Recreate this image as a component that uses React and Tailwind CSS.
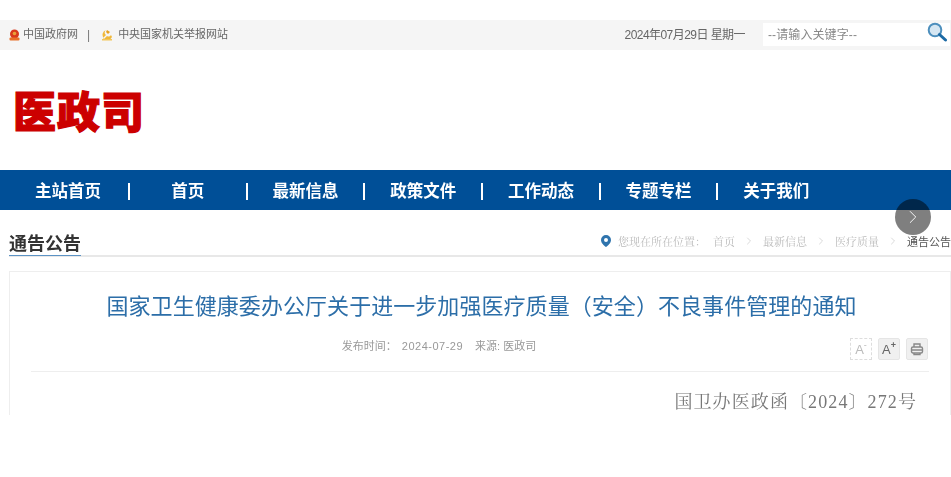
import React from "react";
import { ChevronRight } from "lucide-react";

const nav = ["主站首页", "首页", "最新信息", "政策文件", "工作动态", "专题专栏", "关于我们"];
const crumbs = ["首页", "最新信息", "医疗质量"];

function Emblem() {
  return (
    <svg width="11" height="12" viewBox="0 0 11 12" className="shrink-0">
      <circle cx="5.5" cy="5" r="4.5" fill="#d9391c" />
      <circle cx="5.5" cy="4.5" r="1.8" fill="#e9a13a" />
      <rect x="0.5" y="8.5" width="10" height="3" rx="1" fill="#e8702a" />
    </svg>
  );
}

function Party() {
  return (
    <svg width="12" height="12" viewBox="0 0 12 12" className="shrink-0">
      <path d="M5 1a5 5 0 1 0 6 7l-1-2a3 3 0 0 1-4 1L3 10l-1-1 3-3a3 3 0 0 1 0-5z" fill="#f0b83a" />
      <path d="M6 1l3 2-2 2-2-2z" fill="#e8a020" />
      <path d="M1 10h10v1.5H1z" fill="#f2c65a" />
    </svg>
  );
}

function Search() {
  return (
    <svg width="22" height="20" viewBox="0 0 22 20" className="absolute right-[2px] top-[-1px]">
      <circle cx="9" cy="8" r="6.3" fill="#d5e6f2" stroke="#4d8fbd" strokeWidth="2" />
      <path d="M13.5 12.5L19.5 18" stroke="#1c6aa5" strokeWidth="3" strokeLinecap="round" />
    </svg>
  );
}

function Pin() {
  return (
    <svg width="10" height="12" viewBox="0 0 10 12" className="shrink-0">
      <path fillRule="evenodd" d="M5 0a5 5 0 0 1 5 5c0 3-3 5.500-5 7-2-1.500-5-4-5-7a5 5 0 0 1 5-5zm0 3a2 2 0 1 0 0 4 2 2 0 0 0 0-4z" fill="#2f74ad" />
    </svg>
  );
}

function Printer() {
  return (
    <svg width="14" height="14" viewBox="0 0 14 14" fill="none" stroke="#888" strokeWidth="1.4">
      <path d="M4 5V2h6v3" />
      <rect x="1.5" y="5" width="11" height="6" rx="1.5" />
      <path d="M1.5 8h11M4 11v1.5h6V11" />
    </svg>
  );
}

export default function App() {
  return (
    <div className="h-[477px] w-[951px] overflow-hidden bg-white pt-5 font-['Liberation_Sans','Noto_Sans_CJK_SC',sans-serif]">
      <div className="flex h-[30px] items-center bg-[#f5f5f5] pb-[1px] pl-[9px] pr-[1px] text-[11px] text-[#666] blur-[0.4px]">
        <Emblem />
        <span className="ml-[3px]">中国政府网</span>
        <span className="ml-[9px] mr-[11px] text-[12px] text-[#777]">|</span>
        <Party />
        <span className="ml-[5px]">中央国家机关举报网站</span>
        <span className="ml-auto text-[12px] tracking-[-0.55px]">2024年07月29日 星期一</span>
        <div className="relative ml-[18px] flex h-[23px] w-[187px] items-center bg-white pl-[5px] text-[12px] text-[#888]">
          <span className="tracking-[0.1px]">--请输入关键字--</span>
          <Search />
        </div>
      </div>

      <div className="flex h-[120px] items-start pl-[13px] pt-[32px]">
        <span className="font-['Noto_Sans_CJK_SC',sans-serif] text-[43px] leading-[54px] font-black tracking-[1px] text-[#cc0000] [-webkit-text-stroke:1.2px_#cc0000]">
          医政司
        </span>
      </div>

      <nav className="flex h-10 items-center bg-[#004f97] pl-[10px] text-[16.5px] font-bold text-white blur-[0.35px]">
        {nav.map((item, i) => (
          <React.Fragment key={item}>
            {i === 1 && <span className="w-[2px] shrink-0" />}
            {i > 0 && <span className="mt-[2px] h-[17px] w-[2px] shrink-0 bg-white" />}
            <span className={`pt-[2px] text-center ${i === 0 ? "w-[116px]" : "w-[115.7px]"}`}>{item}</span>
          </React.Fragment>
        ))}
      </nav>

      <div className="relative">
        <button className="absolute left-[895px] top-[-11px] flex h-9 w-9 items-center justify-center rounded-full bg-[#000]/50 text-white">
          <ChevronRight size={22} strokeWidth={1} />
        </button>
      </div>

      <div className="ml-[9px] mt-5 flex h-[27px] items-end border-b-2 border-[#e8e8e8]">
        <h2 className="mb-[-1px] h-[27px] border-b border-[#5c93c5] pt-[3px] text-[18px] leading-[25px] font-bold text-[#333] blur-[0.35px]">
          通告公告
        </h2>
        <div className="ml-auto flex h-[25px] items-center pb-[3px] font-['Noto_Serif_CJK_SC','Noto_Sans_CJK_SC',serif] text-[11px] text-[#bbb] blur-[0.4px]">
          <Pin />
          <span className="ml-[7px] w-[95px]">您现在所在位置：</span>
          {crumbs.map((c) => (
            <React.Fragment key={c}>
              <span>{c}</span>
              <ChevronRight size={12} strokeWidth={1.5} className="mx-[8px] text-[#ccc]" />
            </React.Fragment>
          ))}
          <span className="font-['Noto_Sans_CJK_SC',sans-serif] text-[#555]">通告公告</span>
        </div>
      </div>

      <section className="ml-[9px] mt-[14px] h-[144px] overflow-hidden border-x border-t border-[#eee] px-[21px]">
        <h1 className="mt-5 pl-[3px] text-center text-[22px] leading-[30px] tracking-[0.06px] text-[#2c6ea8] blur-[0.3px]">
          国家卫生健康委办公厅关于进一步加强医疗质量（安全）不良事件管理的通知
        </h1>
        <div className="relative mt-[14px] h-[36px] border-b border-[#eee] pt-[2px] text-center text-[11px] leading-[17px] text-[#999] blur-[0.3px]">
          <div className="relative left-[-41px]">
            <span>发布时间：</span>
            <span className="ml-[5px] tracking-[0.5px]">2024-07-29</span>
            <span className="ml-3">来源: 医政司</span>
          </div>
          <div className="absolute right-[1px] top-[2px] flex gap-[6px]">
            <span className="flex h-[22px] w-[22px] items-center justify-center border border-dashed border-[#ddd] text-[13px] text-[#bbb]">
              A<sup className="text-[9px]">-</sup>
            </span>
            <span className="flex h-[22px] w-[22px] items-center justify-center rounded-[2px] border border-[#e5e5e5] bg-[#f0f0f0] text-[13px] text-[#666]">
              A<sup className="text-[9px] font-bold">+</sup>
            </span>
            <span className="flex h-[22px] w-[22px] items-center justify-center rounded-[2px] border border-[#e5e5e5] bg-[#f0f0f0]">
              <Printer />
            </span>
          </div>
        </div>
        <p className="mt-4 pr-[12px] text-right font-['Liberation_Serif','Noto_Serif_CJK_SC','Noto_Sans_CJK_SC',serif] text-[18px] leading-[28px] tracking-[1.1px] text-[#777] blur-[0.4px]">
          国卫办医政函〔2024〕272号
        </p>
      </section>
    </div>
  );
}
